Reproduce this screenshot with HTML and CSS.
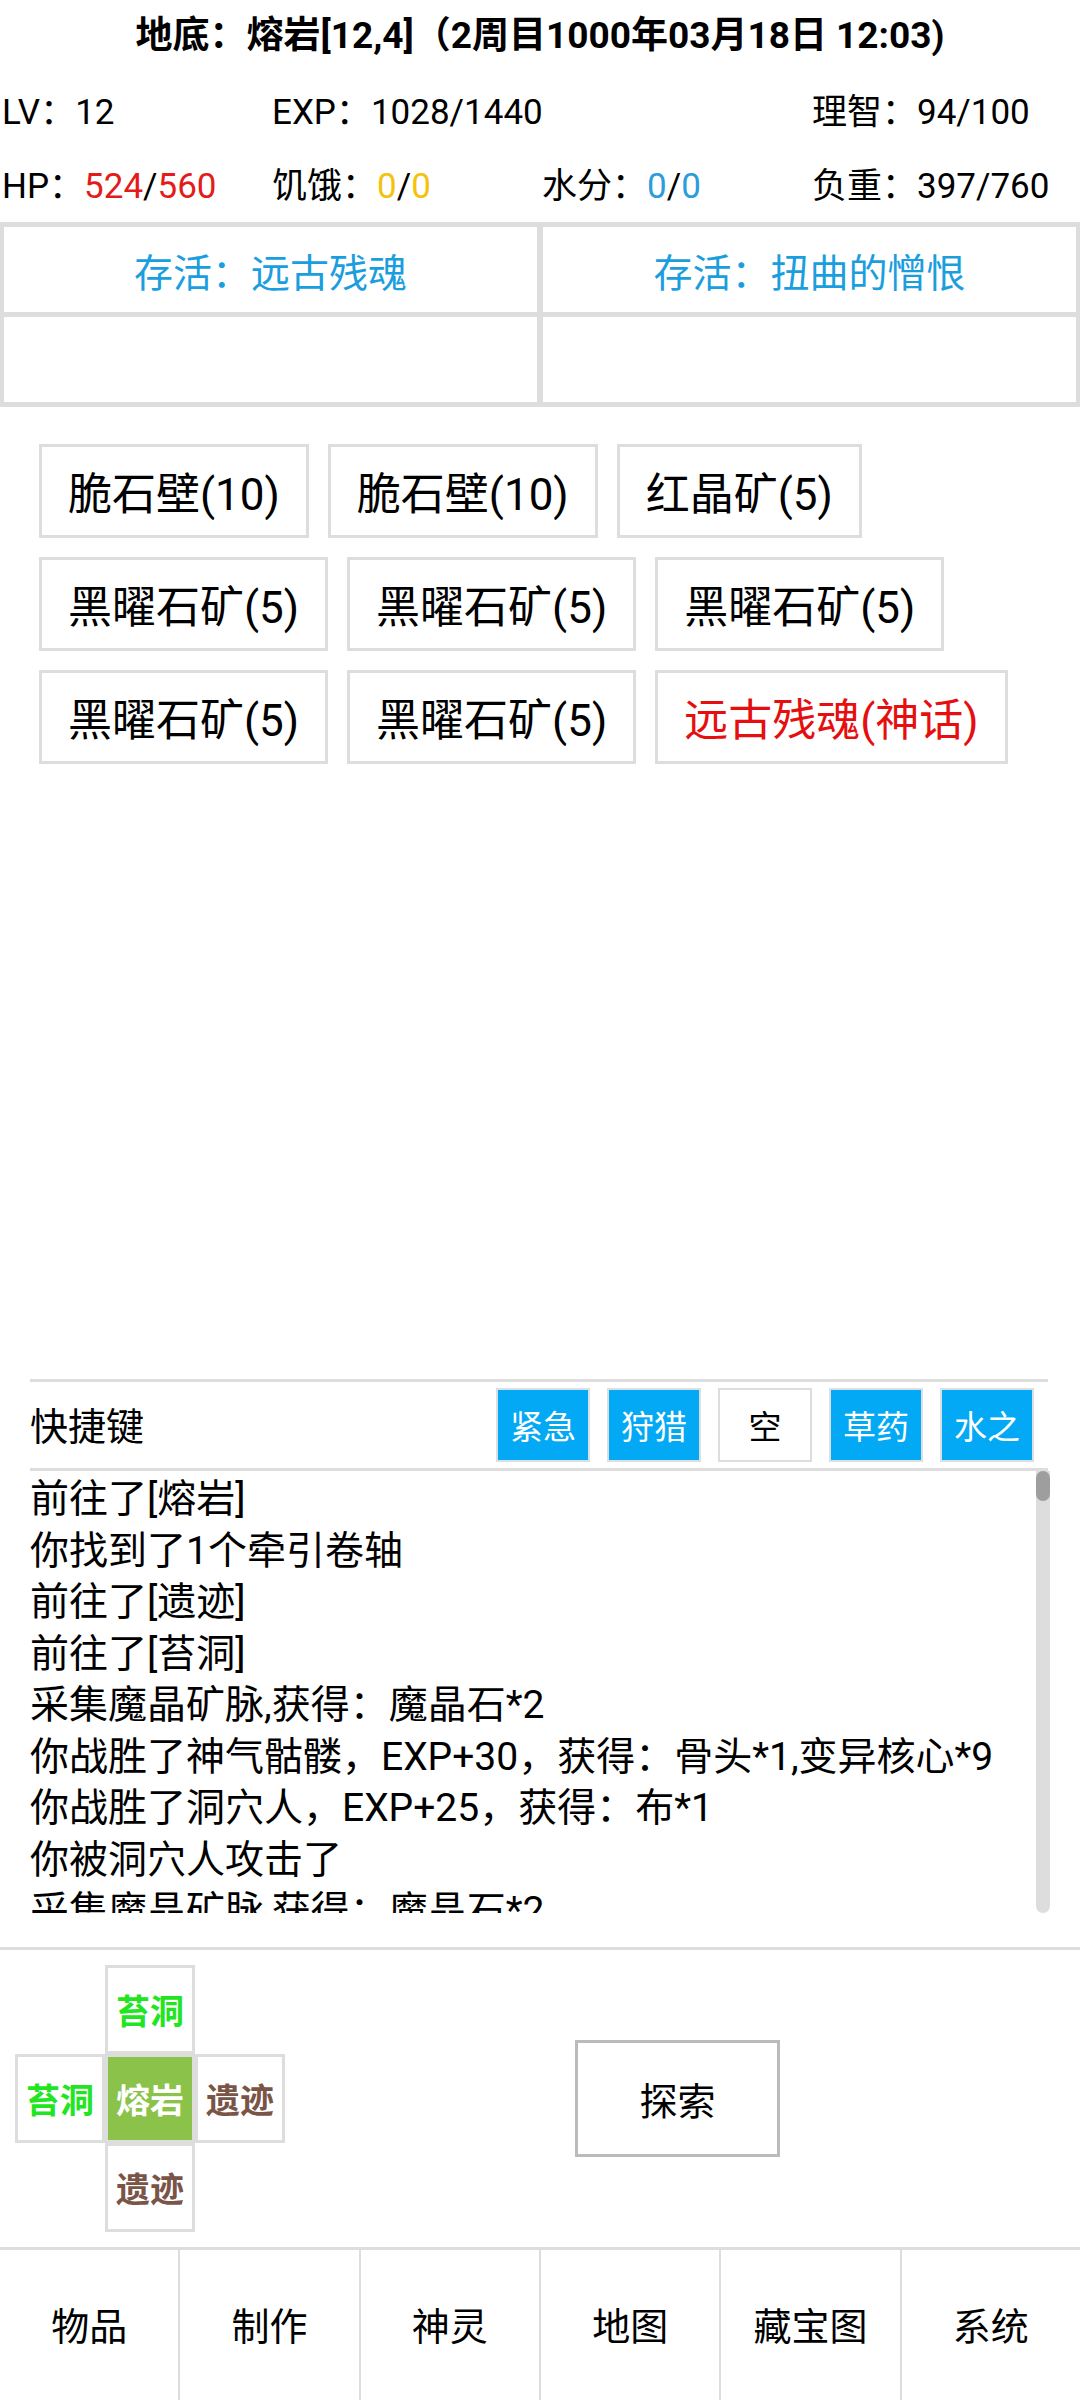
FILE: index.html
```html
<!DOCTYPE html>
<html lang="zh-CN">
<head>
  <meta charset="UTF-8">
  <meta name="viewport" content="width=device-width, initial-scale=1.0">
  <title>地底</title>
  <link rel="stylesheet" href="styles.css">
</head>
<body>
<div class="page">
  <div class="title">地底：熔岩[12,4]（2周目1000年03月18日 12:03)</div>

  <div class="stats">
    <div class="stat">LV：12</div>
    <div class="stat">EXP：1028/1440</div>
    <div class="stat"></div>
    <div class="stat">理智：94/100</div>
    <div class="stat">HP：<span class="red">524</span>/<span class="red">560</span></div>
    <div class="stat">饥饿：<span class="yellow">0</span>/<span class="yellow">0</span></div>
    <div class="stat">水分：<span class="blue">0</span>/<span class="blue">0</span></div>
    <div class="stat">负重：397/760</div>
  </div>

  <div class="buffs">
    <div class="buff">存活：远古残魂</div>
    <div class="buff">存活：扭曲的憎恨</div>
    <div class="buff"></div>
    <div class="buff"></div>
  </div>

  <div class="items">
    <div class="item">脆石壁(10)</div>
    <div class="item">脆石壁(10)</div>
    <div class="item">红晶矿(5)</div>
    <div class="item">黑曜石矿(5)</div>
    <div class="item">黑曜石矿(5)</div>
    <div class="item">黑曜石矿(5)</div>
    <div class="item">黑曜石矿(5)</div>
    <div class="item">黑曜石矿(5)</div>
    <div class="item myth">远古残魂(神话)</div>
  </div>

  <div class="quick">
    <div class="quick-label">快捷键</div>
    <div class="quick-keys">
      <div class="key">紧急</div>
      <div class="key">狩猎</div>
      <div class="key empty">空</div>
      <div class="key">草药</div>
      <div class="key">水之</div>
    </div>
  </div>

  <div class="log">
    <div class="log-lines">
      <div>前往了[熔岩]</div>
      <div>你找到了1个牵引卷轴</div>
      <div>前往了[遗迹]</div>
      <div>前往了[苔洞]</div>
      <div>采集魔晶矿脉,获得：魔晶石*2</div>
      <div>你战胜了神气骷髅，EXP+30，获得：骨头*1,变异核心*9</div>
      <div>你战胜了洞穴人，EXP+25，获得：布*1</div>
      <div>你被洞穴人攻击了</div>
      <div>采集魔晶矿脉,获得：魔晶石*2</div>
    </div>
    <div class="scrollbar"><div class="thumb"></div></div>
  </div>

  <div class="mapbar">
    <div class="cross">
      <div class="cell none"></div>
      <div class="cell green">苔洞</div>
      <div class="cell none"></div>
      <div class="cell green">苔洞</div>
      <div class="cell here">熔岩</div>
      <div class="cell brown">遗迹</div>
      <div class="cell none"></div>
      <div class="cell brown">遗迹</div>
      <div class="cell none"></div>
    </div>
    <div class="explore-wrap">
      <div class="explore">探索</div>
    </div>
  </div>

  <div class="nav">
    <div class="tab">物品</div>
    <div class="tab">制作</div>
    <div class="tab">神灵</div>
    <div class="tab">地图</div>
    <div class="tab">藏宝图</div>
    <div class="tab">系统</div>
  </div>
</div>
</body>
</html>
```

FILE: styles.css
```css
body {
  margin: 0;
  background: #fff;
  color: #000;
  font-family: Roboto, "Noto Sans CJK SC", sans-serif;
}
.page {
  width: 1080px;
  height: 2400px;
  display: flex;
  flex-direction: column;
  overflow: hidden;
}
.title {
  height: 74px;
  line-height: 72px;
  text-align: center;
  font-size: 37px;
  font-weight: bold;
  white-space: nowrap;
}
.stats {
  display: grid;
  grid-template-columns: repeat(4, 270px);
  grid-auto-rows: 74px;
}
.stat {
  font-size: 35px;
  line-height: 71px;
  padding-top: 3px;
  padding-left: 2px;
  white-space: nowrap;
}
.red { color: #e31b1b; }
.yellow { color: #f4c20d; }
.blue { color: #2d9cdb; }

.buffs {
  display: grid;
  grid-template-columns: 1fr 1fr;
  grid-auto-rows: 85px;
  gap: 5px 6px;
  padding: 5px 4px;
  background: #dddddd;
}
.buff {
  background: #fff;
  color: #1b9ede;
  font-size: 39px;
  display: flex;
  align-items: center;
  justify-content: center;
}

.items {
  flex: 1;
  display: flex;
  flex-wrap: wrap;
  align-content: flex-start;
  gap: 19px;
  padding: 37px 30px 0 39px;
}
.item {
  height: 94px;
  box-sizing: border-box;
  padding: 0 26px;
  border: 3px solid #dddddd;
  font-size: 44px;
  display: flex;
  align-items: center;
}
.item.myth { color: #e50f0f; }

.quick {
  margin: 0 32px 0 30px;
  height: 86px;
  border-top: 3px solid #dddddd;
  border-bottom: 3px solid #dddddd;
  display: flex;
  align-items: center;
  justify-content: space-between;
}
.quick-label {
  font-size: 38px;
  margin-bottom: 4px;
}
.quick-keys {
  display: flex;
  gap: 17px;
  margin-right: 14px;
}
.key {
  width: 94px;
  height: 74px;
  box-sizing: border-box;
  border: 2px solid #d9dfe3;
  background: #03a9f4;
  color: #fff;
  font-size: 33px;
  display: flex;
  align-items: center;
  justify-content: center;
}
.key.empty {
  background: #fff;
  color: #000;
  border-color: #dddddd;
}

.log {
  margin: 0 30px 34px 30px;
  height: 442px;
  display: flex;
}
.log-lines {
  flex: 1;
  overflow: hidden;
  padding-top: 3px;
  font-size: 39px;
  line-height: 51.5px;
  white-space: nowrap;
}
.scrollbar {
  width: 14px;
  background: #dddddd;
  border-radius: 0 0 7px 7px;
}
.thumb {
  height: 30px;
  background: #9e9e9e;
  border-radius: 7px;
}

.mapbar {
  border-top: 3px solid #dddddd;
  height: 297px;
  display: flex;
  align-items: center;
  padding-left: 15px;
}
.cross {
  display: grid;
  grid-template-columns: repeat(3, 90px);
  grid-template-rows: repeat(3, 89px);
}
.cell {
  box-sizing: border-box;
  border: 3px solid #dddddd;
  font-size: 34px;
  font-weight: bold;
  display: flex;
  align-items: center;
  justify-content: center;
}
.cell.none { border: none; }
.cell.green { color: #22e522; }
.cell.brown { color: #795548; }
.cell.here {
  background: #8bc34a;
  color: #fff;
}
.explore-wrap {
  flex: 1;
  display: flex;
  justify-content: center;
  padding-right: 10px;
}
.explore {
  width: 205px;
  height: 117px;
  box-sizing: border-box;
  border: 3px solid #bbbbbb;
  font-size: 38px;
  display: flex;
  align-items: center;
  justify-content: center;
}

.nav {
  border-top: 3px solid #dddddd;
  height: 150px;
  display: flex;
}
.tab {
  flex: 1;
  font-size: 38px;
  display: flex;
  align-items: center;
  justify-content: center;
  padding-bottom: 4px;
}
.tab + .tab {
  border-left: 2px solid #dddddd;
}
```
